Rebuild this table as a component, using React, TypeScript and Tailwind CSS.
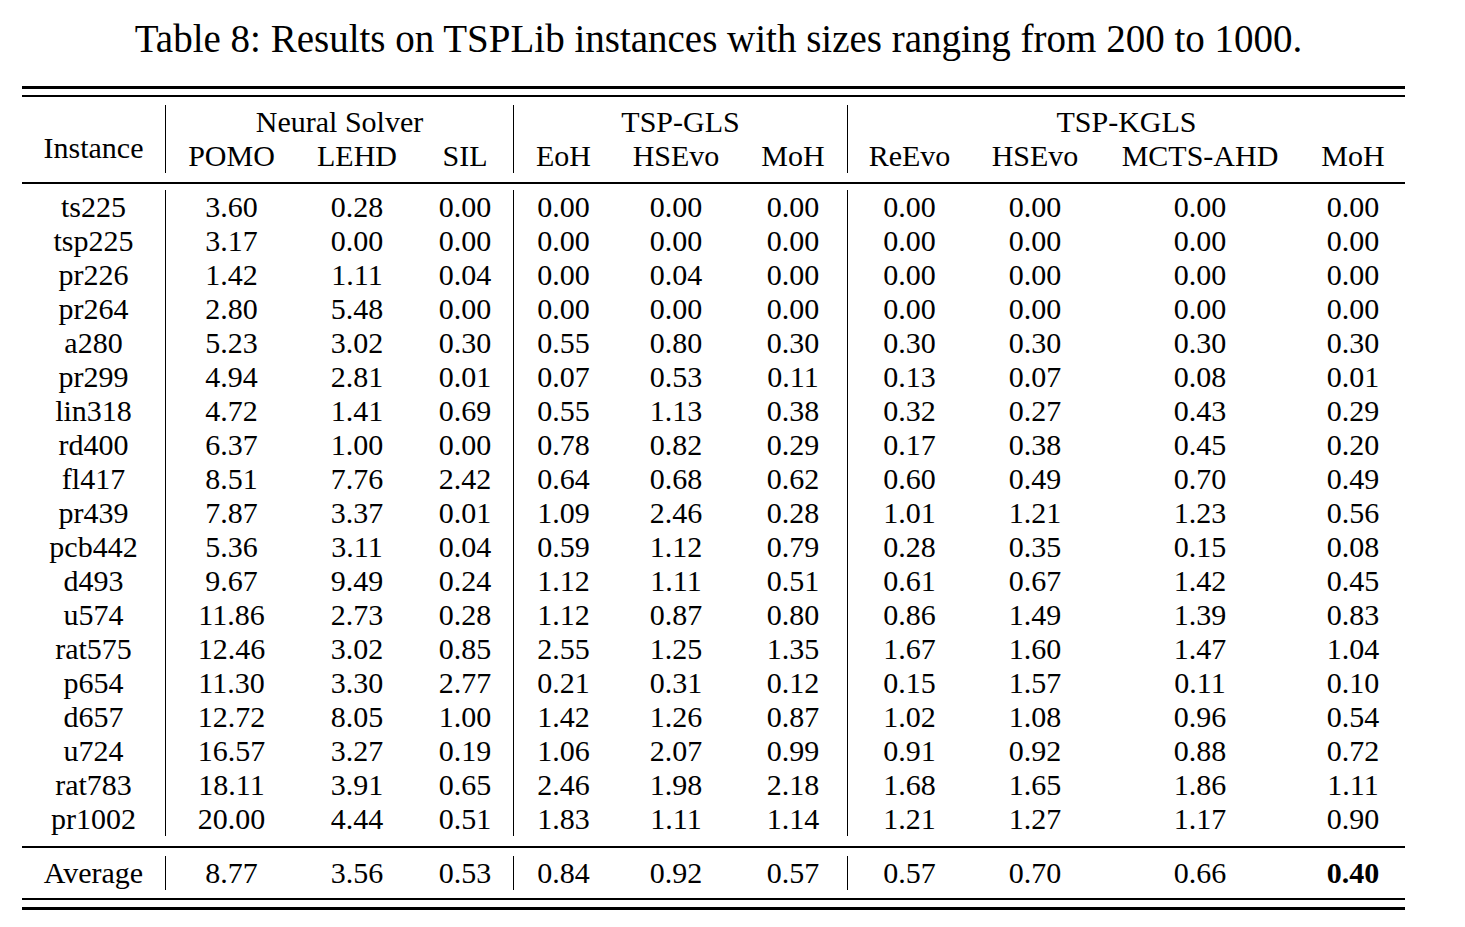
import React from "react";

// Table 8 from the paper: TSPLib gaps (%) for sizes 200–1000.
const COLS = "grid grid-cols-[143px_132px_120px_96px_100px_126px_108px_124px_128px_202px_104px]";
const BAR = new Set([1, 4, 7]); // columns that open a group get the vertical rule

const ROWS: string[][] = [
  ["ts225", "3.60", "0.28", "0.00", "0.00", "0.00", "0.00", "0.00", "0.00", "0.00", "0.00"],
  ["tsp225", "3.17", "0.00", "0.00", "0.00", "0.00", "0.00", "0.00", "0.00", "0.00", "0.00"],
  ["pr226", "1.42", "1.11", "0.04", "0.00", "0.04", "0.00", "0.00", "0.00", "0.00", "0.00"],
  ["pr264", "2.80", "5.48", "0.00", "0.00", "0.00", "0.00", "0.00", "0.00", "0.00", "0.00"],
  ["a280", "5.23", "3.02", "0.30", "0.55", "0.80", "0.30", "0.30", "0.30", "0.30", "0.30"],
  ["pr299", "4.94", "2.81", "0.01", "0.07", "0.53", "0.11", "0.13", "0.07", "0.08", "0.01"],
  ["lin318", "4.72", "1.41", "0.69", "0.55", "1.13", "0.38", "0.32", "0.27", "0.43", "0.29"],
  ["rd400", "6.37", "1.00", "0.00", "0.78", "0.82", "0.29", "0.17", "0.38", "0.45", "0.20"],
  ["fl417", "8.51", "7.76", "2.42", "0.64", "0.68", "0.62", "0.60", "0.49", "0.70", "0.49"],
  ["pr439", "7.87", "3.37", "0.01", "1.09", "2.46", "0.28", "1.01", "1.21", "1.23", "0.56"],
  ["pcb442", "5.36", "3.11", "0.04", "0.59", "1.12", "0.79", "0.28", "0.35", "0.15", "0.08"],
  ["d493", "9.67", "9.49", "0.24", "1.12", "1.11", "0.51", "0.61", "0.67", "1.42", "0.45"],
  ["u574", "11.86", "2.73", "0.28", "1.12", "0.87", "0.80", "0.86", "1.49", "1.39", "0.83"],
  ["rat575", "12.46", "3.02", "0.85", "2.55", "1.25", "1.35", "1.67", "1.60", "1.47", "1.04"],
  ["p654", "11.30", "3.30", "2.77", "0.21", "0.31", "0.12", "0.15", "1.57", "0.11", "0.10"],
  ["d657", "12.72", "8.05", "1.00", "1.42", "1.26", "0.87", "1.02", "1.08", "0.96", "0.54"],
  ["u724", "16.57", "3.27", "0.19", "1.06", "2.07", "0.99", "0.91", "0.92", "0.88", "0.72"],
  ["rat783", "18.11", "3.91", "0.65", "2.46", "1.98", "2.18", "1.68", "1.65", "1.86", "1.11"],
  ["pr1002", "20.00", "4.44", "0.51", "1.83", "1.11", "1.14", "1.21", "1.27", "1.17", "0.90"],
];

const AVG = ["Average", "8.77", "3.56", "0.53", "0.84", "0.92", "0.57", "0.57", "0.70", "0.66", "0.40"];

function Cell({ i, children, bold }: { i: number; children: React.ReactNode; bold?: boolean }) {
  return (
    <div className={"text-center " + (BAR.has(i) ? "border-l border-black " : "") + (bold ? "font-bold" : "")}>
      {children}
    </div>
  );
}

export default function App() {
  return (
    <div className="min-h-screen bg-white font-['Liberation_Serif','Times_New_Roman',serif] text-black">
      <div className="ml-[22px] w-[1383px]">
        <div className="pt-[17px] pl-[10px] text-center text-[39px] leading-[44px]">
          Table 8: Results on TSPLib instances with sizes ranging from 200 to 1000.
        </div>

        <div className="mt-[25px] h-[3px] bg-black" />
        <div className="mt-[6px] h-[2px] bg-black" />

        {/* header */}
        <div className={COLS + " mt-[8px] text-[30px] leading-[34px]"}>
          <div className="row-span-2 pt-[26px] text-center">Instance</div>
          <div className="col-span-3 border-l border-black text-center">Neural Solver</div>
          <div className="col-span-3 border-l border-black text-center">TSP-GLS</div>
          <div className="col-span-4 border-l border-black text-center">TSP-KGLS</div>
          {["POMO", "LEHD", "SIL", "EoH", "HSEvo", "MoH", "ReEvo", "HSEvo", "MCTS-AHD", "MoH"].map((h, k) => (
            <Cell key={k} i={k + 1}>{h}</Cell>
          ))}
        </div>

        <div className="mt-[9px] h-[2px] bg-black" />

        {/* body */}
        <div className={COLS + " mt-[6px] text-[30px] leading-[34px]"}>
          {ROWS.map((r) =>
            r.map((v, i) => (
              <Cell key={r[0] + i} i={i}>{v}</Cell>
            ))
          )}
        </div>

        <div className="mt-[10px] h-[2px] bg-black" />

        {/* average */}
        <div className={COLS + " mt-[8px] text-[30px] leading-[34px]"}>
          {AVG.map((v, i) => (
            <Cell key={i} i={i} bold={i === AVG.length - 1}>{v}</Cell>
          ))}
        </div>

        <div className="mt-[8px] h-[2px] bg-black" />
        <div className="mt-[7px] h-[3px] bg-black" />
      </div>
    </div>
  );
}
